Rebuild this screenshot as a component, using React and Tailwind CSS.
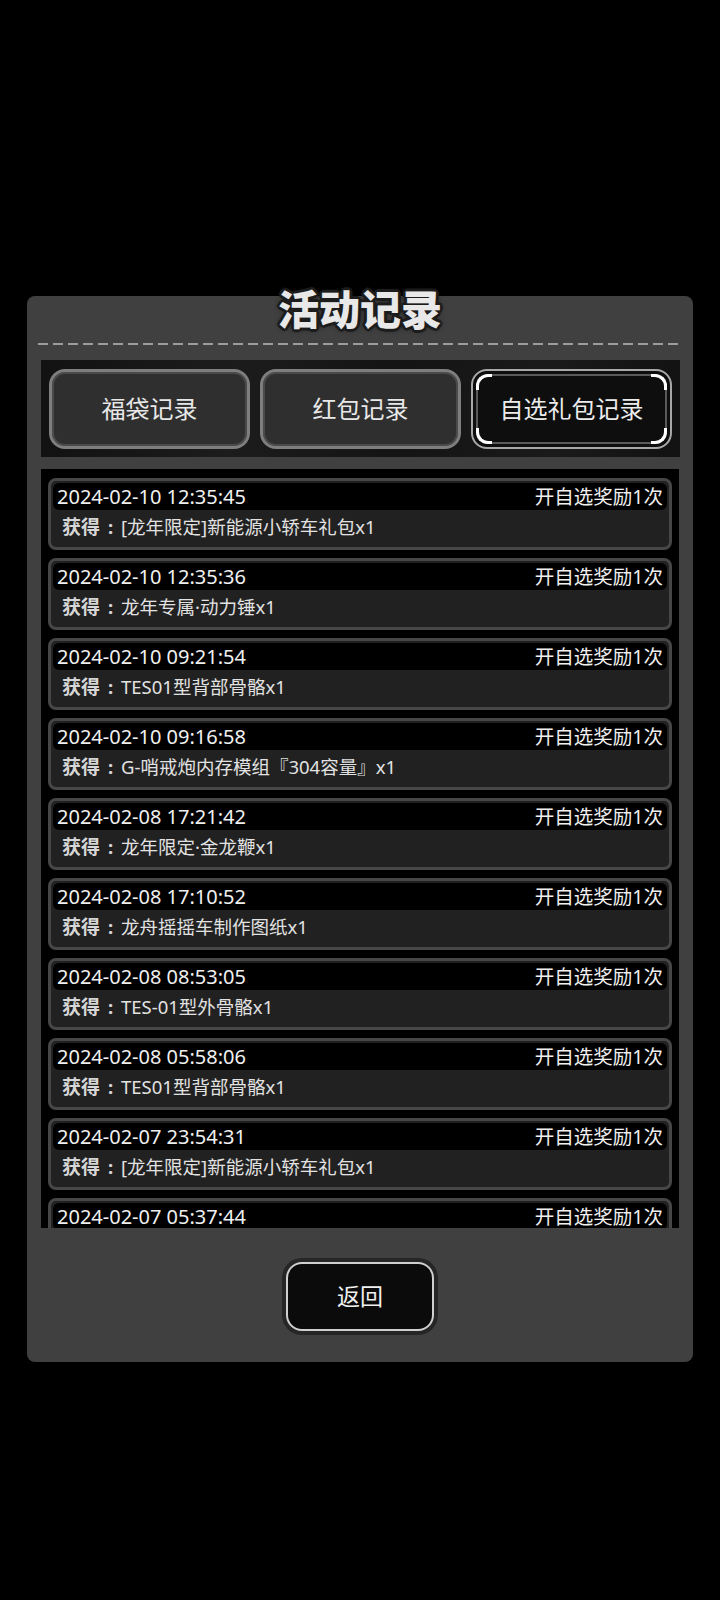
import React from 'react';

const records = [
  { time: '2024-02-10 12:35:45', item: '[龙年限定]新能源小轿车礼包x1' },
  { time: '2024-02-10 12:35:36', item: '龙年专属·动力锤x1' },
  { time: '2024-02-10 09:21:54', item: 'TES01型背部骨骼x1' },
  { time: '2024-02-10 09:16:58', item: 'G-哨戒炮内存模组『304容量』x1' },
  { time: '2024-02-08 17:21:42', item: '龙年限定·金龙鞭x1' },
  { time: '2024-02-08 17:10:52', item: '龙舟摇摇车制作图纸x1' },
  { time: '2024-02-08 08:53:05', item: 'TES-01型外骨骼x1' },
  { time: '2024-02-08 05:58:06', item: 'TES01型背部骨骼x1' },
  { time: '2024-02-07 23:54:31', item: '[龙年限定]新能源小轿车礼包x1' },
  { time: '2024-02-07 05:37:44', item: '龙年专属·动力锤x1' },
];

const font = { fontFamily: '"Noto Sans", "Noto Sans CJK SC", sans-serif' };

function Tab({ label, active }) {
  if (active) {
    return (
      <div className="w-[201px] h-[80px] rounded-[16px] border-2 border-[#a8a8a8] bg-[#0e0e0e] p-[3px]">
        <div className="relative h-full rounded-[12px] border-2 border-[#5a5a5a] flex items-center justify-center text-[24px] text-[#ececec]">
          {label}
          {/* corner brackets */}
          <span className="absolute -top-[2px] -left-[2px] w-[16px] h-[16px] border-t-[3px] border-l-[3px] border-white rounded-tl-[12px]" />
          <span className="absolute -top-[2px] -right-[2px] w-[16px] h-[16px] border-t-[3px] border-r-[3px] border-white rounded-tr-[12px]" />
          <span className="absolute -bottom-[2px] -left-[2px] w-[16px] h-[16px] border-b-[3px] border-l-[3px] border-white rounded-bl-[12px]" />
          <span className="absolute -bottom-[2px] -right-[2px] w-[16px] h-[16px] border-b-[3px] border-r-[3px] border-white rounded-br-[12px]" />
        </div>
      </div>
    );
  }
  return (
    <div className="w-[201px] h-[80px] rounded-[16px] border-[3px] border-[#7e7e7e] bg-[#2f2f2f] shadow-[inset_0_0_0_2px_#4a4a4a] flex items-center justify-center text-[24px] text-[#e8e8e8]">
      {label}
    </div>
  );
}

function RecordRow({ time, item }) {
  return (
    <div className="h-[72px] shrink-0 rounded-[8px] border-[3px] border-[#464646] bg-[#212121] p-[2px] flex flex-col">
      <div className="h-[27px] rounded-[6px] bg-black flex items-center justify-between px-[4px] text-[20px] text-[#f0f0f0] leading-none">
        <span>{time}</span>
        <span className="text-[19.5px]">开自选奖励1次</span>
      </div>
      <div className="h-[35px] flex items-center px-[9px] text-[18.5px] text-[#e2e2e2] leading-none whitespace-nowrap">
        <span className="font-bold text-[19px] text-[#d6d6d6]">获得</span>
        <span className="inline-block w-[21px] text-center font-bold text-[#d6d6d6]">:</span>
        <span>{item}</span>
      </div>
    </div>
  );
}

export default function App() {
  return (
    <div className="w-[720px] h-[1600px] bg-black pt-[296px] pl-[27px]" style={font}>
      <div className="w-[666px] h-[1066px] rounded-[8px] bg-[#404040] flex flex-col">
        <div className="-mt-[7px] h-[40px] leading-[40px] text-center text-[41px] font-black text-[#e8e8e8] [text-shadow:3px_0_0_#1c1c1c,-3px_0_0_#1c1c1c,0_3px_0_#1c1c1c,0_-3px_0_#1c1c1c,2px_2px_0_#1c1c1c,-2px_-2px_0_#1c1c1c,2px_-2px_0_#1c1c1c,-2px_2px_0_#1c1c1c,0_0_6px_#111]">
          活动记录
        </div>

        <div className="mt-[14px] ml-[11px] mr-[13px] h-[2px] bg-[repeating-linear-gradient(90deg,#9c9c9c_0_10px,transparent_10px_15px)]" />

        <div className="mt-[15px] ml-[14px] mr-[13px] h-[97px] bg-[#151515] bg-[linear-gradient(90deg,#121212,#1c1c1c_30%,#141414_55%,#1a1a1a_80%,#121212)] px-[8px] pt-[9px] flex gap-[10px]">
          <Tab label="福袋记录" />
          <Tab label="红包记录" />
          <Tab label="自选礼包记录" active />
        </div>

        <div className="mt-[12px] ml-[14px] w-[638px] h-[759px] bg-black overflow-hidden px-[7px] pt-[9px] flex flex-col gap-[8px]">
          {records.map((r, i) => (
            <RecordRow key={i} time={r.time} item={r.item} />
          ))}
        </div>

        <div className="mt-[30px] self-center w-[156px] h-[77px] rounded-[20px] bg-[#262626] p-[4px]">
          <div className="h-full rounded-[16px] border-2 border-[#cfcfcf] bg-[#0b0b0b] flex items-center justify-center text-[23px] text-[#f0f0f0]">
            返回
          </div>
        </div>
      </div>
    </div>
  );
}
